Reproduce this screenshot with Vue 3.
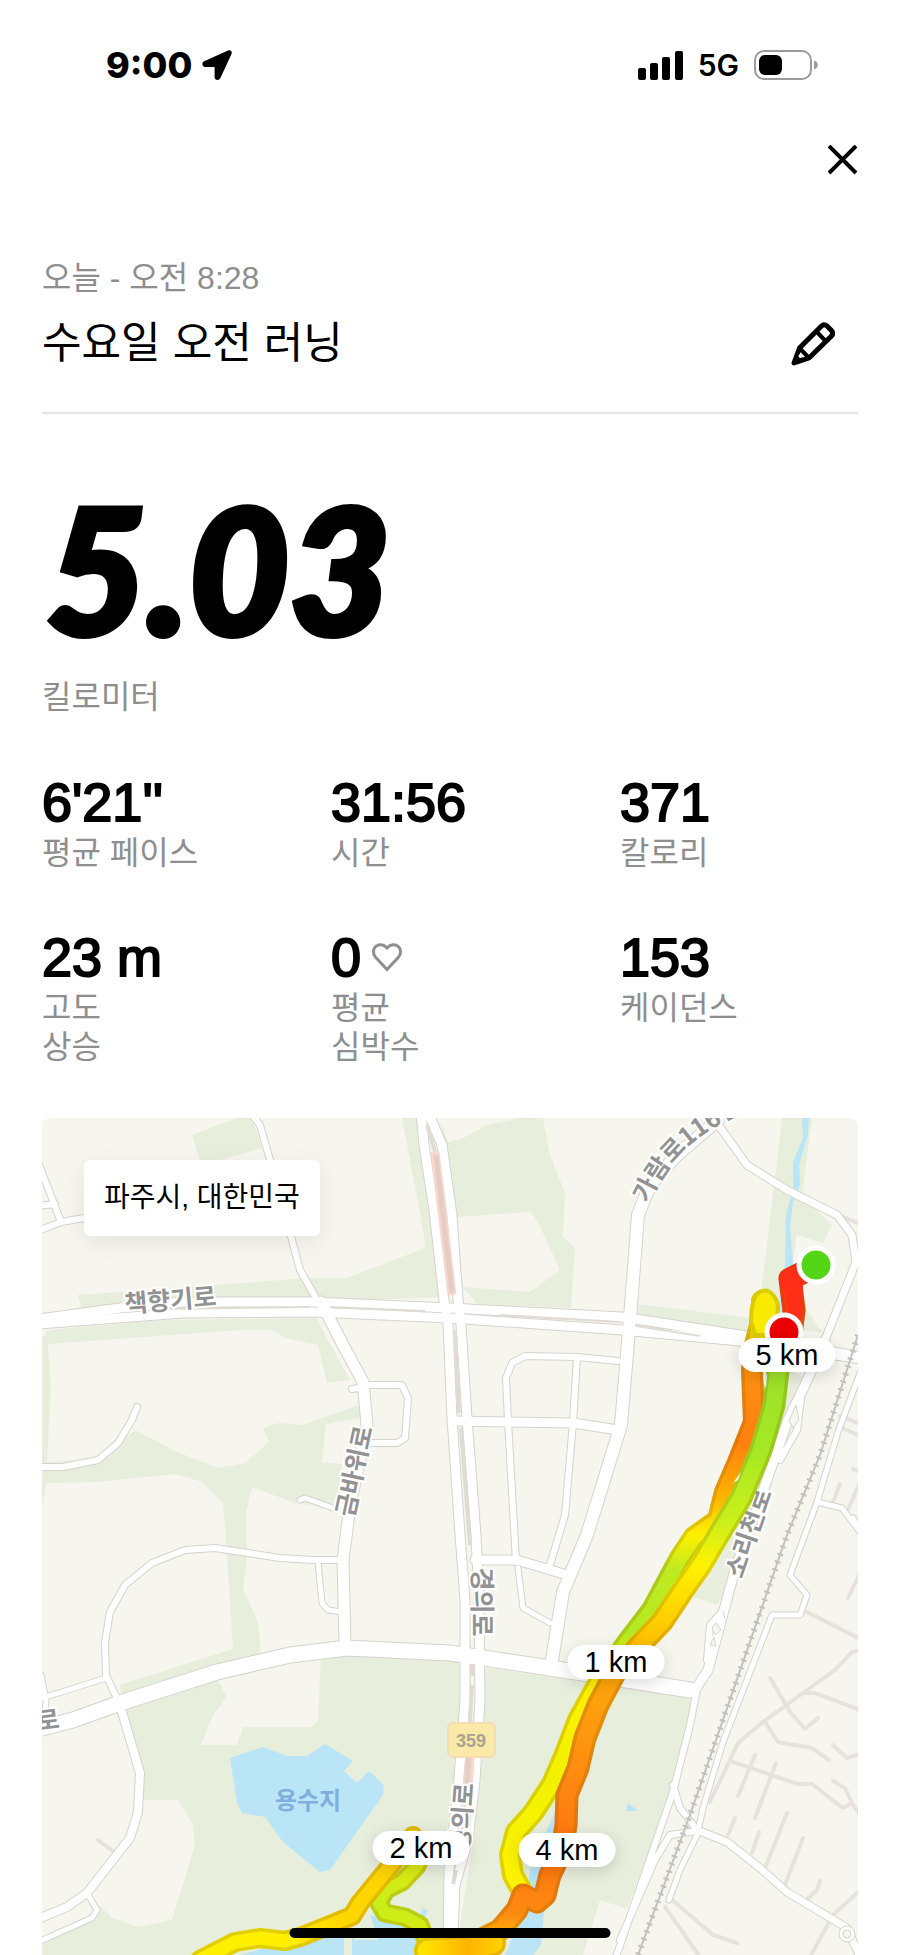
<template>
  <main class="run">
    <header class="status-bar">
      <div class="status-time">
        <span>9:00</span>
        <svg width="30" height="30" viewBox="0 0 30 30" aria-hidden="true">
          <path d="M26 .6 2.200 11.200C-.8 12.600 0 17 3.200 17H12.600V27C12.600 30.400 17 31 18.400 28L29.400 4.200C30.600 1.600 28.600-.5 26 .6Z" />
        </svg>
      </div>
      <div class="status-icons">
        <svg width="45" height="29" viewBox="0 0 45 29" aria-hidden="true">
          <rect x="0" y="17" width="8" height="12" rx="2" />
          <rect x="12" y="12" width="8" height="17" rx="2" />
          <rect x="24" y="6" width="8" height="23" rx="2" />
          <rect x="37" y="0" width="8" height="29" rx="2" />
        </svg>
        <span class="network">5G</span>
        <svg width="64" height="30" viewBox="0 0 64 30" aria-hidden="true">
          <rect x="1" y="1" width="56" height="28" rx="9" fill="none" stroke="#9b9b9b" stroke-width="2" />
          <rect x="5" y="5" width="23" height="20" rx="6" />
          <path d="M60 10.500C65 12 65 18 60 19.500Z" fill="#9b9b9b" />
        </svg>
      </div>
    </header>

    <nav class="toolbar">
      <button type="button" class="icon-button" aria-label="닫기">
        <svg width="30" height="30" viewBox="0 0 30 30" aria-hidden="true">
          <path d="M1 1 28 28M28 1 1 28" fill="none" stroke="#000" stroke-width="4" />
        </svg>
      </button>
    </nav>

    <section class="heading">
      <div>
        <p class="date">오늘 - 오전 8:28</p>
        <h1 class="title">수요일 오전 러닝</h1>
      </div>
      <button type="button" class="icon-button edit" aria-label="이름 수정">
        <svg width="44" height="44" viewBox="0 0 44 44" aria-hidden="true">
          <g fill="none" stroke="#000" stroke-width="5" stroke-linejoin="round">
            <path d="M3 41 8.500 26 30.500 4Q33 1.500 36 4L40.500 8.500Q43 11.500 40.500 14L18 36Z" />
            <path d="M25.500 9.500 35 19.500M8.500 26 18 36" stroke-width="4" />
          </g>
          <path d="M2 42 6 30 14 38Z" />
          <circle cx="9.500" cy="34" r="2" fill="#fff" />
        </svg>
      </button>
    </section>

    <section class="distance">
      <p class="distance-value">5.03</p>
      <p class="label">킬로미터</p>
    </section>

    <dl class="stats">
      <div v-for="stat in stats" :key="stat.label" class="stat">
        <dd class="value">
          {{ stat.value }}
          <svg v-if="stat.heart" width="32" height="30" viewBox="0 0 32 30" aria-hidden="true">
            <path
              d="M16 27.500 4.800 15.600C-2.500 7 8.500-2.500 16 6 23.500-2.500 34.500 7 27.200 15.600Z"
              fill="none"
              stroke="#8e8e8e"
              stroke-width="3"
            />
          </svg>
        </dd>
        <dt class="label">{{ stat.label }}</dt>
      </div>
    </dl>

    <section class="map" aria-label="러닝 경로">
      <svg class="map-canvas" :viewBox="`${view.x} ${view.y} ${view.w} ${view.h}`">
        <defs>
          <linearGradient
            v-for="track in tracks"
            :id="track.id"
            :key="track.id"
            gradientUnits="userSpaceOnUse"
            :x1="track.from[0]"
            :y1="track.from[1]"
            :x2="track.to[0]"
            :y2="track.to[1]"
          >
            <stop v-for="[offset, color] in track.stops" :key="offset" :offset="offset" :stop-color="color" />
          </linearGradient>
          <path id="garam-ro" d="M648 1204Q666 1164 694 1142T778 1094" />
        </defs>

        <!-- land -->
        <rect x="42" y="1118" width="816" height="837" fill="#f7f6ee" />
        <g fill="#e7eedc">
          <polygon v-for="area in parks" :key="area" :points="area" />
        </g>
        <g fill="#f7f6ee">
          <polygon v-for="area in clearings" :key="area" :points="area" />
        </g>
        <g fill="#b9e5f7">
          <polygon v-for="area in waters" :key="area" :points="area" />
        </g>
        <path d="M348 1930V1955M354 1936H378" fill="none" stroke="#e7eedc" stroke-width="8" />

        <!-- roads: casing first, then surface -->
        <g fill="none" stroke="#e6e2dc" stroke-width="4" stroke-linecap="round" stroke-linejoin="round">
          <path v-for="d in lanes" :key="d" :d="d" />
        </g>
        <g fill="none" stroke="#d6d2cd" stroke-linecap="round" stroke-linejoin="round">
          <path v-for="[width, d] in roads" :key="d" :d="d" :stroke-width="width + 2" />
        </g>
        <g fill="none" stroke="#fff" stroke-linecap="round" stroke-linejoin="round">
          <path v-for="[width, d] in roads" :key="d" :d="d" :stroke-width="width" />
        </g>
        <g fill="none" stroke="#e0dcd5" stroke-width="4">
          <path d="M427 1125 435 1152M455 1330 459 1413M461 1428 470 1545M472 1665V1676M472 1685 470 1722" />
          <path d="M160 1309 310 1307M330 1307 425 1311M500 1315 620 1322M636 1326 700 1336" stroke-width="2" />
          <path d="M456 1870 453 1884" />
        </g>
        <path d="M435 1152 452 1295M470 1757 465 1845" fill="none" stroke="#f7d8cf" stroke-width="9" />
        <path d="M436 1155 452 1293M469 1757 467 1785" fill="none" stroke="#e6cdc3" stroke-width="5" />
        <circle cx="847" cy="1934" r="8" fill="#fff" stroke="#d6d2cd" />
        <circle cx="847" cy="1934" r="4" fill="#f7f6ee" stroke="#d6d2cd" />
        <path
          d="M796 1405 799 1420 793 1428 789 1421ZM716 1623 721 1630 715 1635 712 1628ZM714 1637 710 1645 716 1646ZM723 1611 725 1619"
          fill="#f7f6ee"
          stroke="#d6d2cd"
        />
        <g fill="none" stroke="#c3c1be">
          <path d="M858 1335 820 1455 787 1535 690 1815 638 1955" stroke-width="2" />
          <path d="M858 1335 820 1455 787 1535 690 1815 638 1955" stroke-width="6" stroke-dasharray="2 6" />
        </g>

        <!-- road names -->
        <g class="road-name">
          <text transform="translate(171 1309) rotate(-5)">책향기로</text>
          <text transform="translate(363 1473) rotate(-78)">금바위로</text>
          <text transform="translate(473 1602) rotate(90)">경의로</text>
          <text transform="translate(471 1818) rotate(-86)">경의로</text>
          <text transform="translate(757 1536) rotate(-71)">소리천로</text>
          <text transform="translate(49 1729) rotate(-7)">로</text>
          <text class="start"><textPath href="#garam-ro">가람로116번길</textPath></text>
        </g>
        <text class="lake-name" x="308" y="1809">용수지</text>
        <rect x="448" y="1723" width="47" height="34" rx="5" fill="#fbe9a8" stroke="#f6dcb4" stroke-width="2" />
        <text class="route-number" x="471" y="1747">359</text>

        <!-- running track -->
        <g v-for="track in tracks" :key="track.id" fill="none" stroke-linecap="round" stroke-linejoin="round">
          <path :d="track.d" :stroke="`url(#${track.id})`" :stroke-width="track.width" />
          <path :d="track.d" stroke="#7a5a00" stroke-opacity=".22" :stroke-width="track.width" />
          <path :d="track.d" :stroke="`url(#${track.id})`" :stroke-width="track.width - 7" />
        </g>
        <path
          d="M762 1291C771 1288 778 1300 778 1308L774 1335H755L751 1322Q751 1294 762 1291Z"
          fill="#f8ea00"
          stroke="#dccb00"
          stroke-width="4"
        />
        <path d="M783 1272Q790 1265 802 1268L803 1290 801 1320H788L787 1294 779 1284Z" fill="#ff2e16" />
        <path d="M763 1376 767 1374 766 1389ZM733 1483 741 1472 738 1480Z" fill="#f7f6ee" />
        <circle cx="816" cy="1265" r="17" fill="#52d615" stroke="#fff" stroke-width="5" />
        <circle cx="784" cy="1332" r="17" fill="#eb0000" stroke="#fff" stroke-width="5" />
      </svg>

      <span class="place">파주시, 대한민국</span>
      <span v-for="pin in pins" :key="pin.label" class="pin" :style="pinPosition(pin)">{{ pin.label }}</span>
    </section>

    <div class="home-indicator"></div>
  </main>
</template>

<script setup>
const stats = [
  { value: "6'21''", label: '평균 페이스' },
  { value: '31:56', label: '시간' },
  { value: '371', label: '칼로리' },
  { value: '23 m', label: '고도\n상승' },
  { value: '0', label: '평균\n심박수', heart: true },
  { value: '153', label: '케이던스' },
];

const view = { x: 42, y: 1118, w: 816, h: 837 };

const pins = [
  { label: '5 km', x: 787, y: 1355 },
  { label: '1 km', x: 616, y: 1662 },
  { label: '2 km', x: 421, y: 1848 },
  { label: '4 km', x: 567, y: 1850 },
];

const pinPosition = ({ x, y }) => ({
  left: `${((x - view.x) / view.w) * 100}%`,
  top: `${((y - view.y) / view.h) * 100}%`,
});

const parks = [
  '192,1135 237,1118 252,1118 262,1148 220,1160 200,1160',
  '402,1118 422,1118 440,1200 446,1290 436,1298 420,1298 320,1302 82,1310 78,1295 310,1278 347,1278 425,1248 424,1235',
  '440,1118 448,1142 463,1138 487,1125 520,1118 543,1118 550,1155 565,1193 563,1237 575,1248 571,1308 477,1304 462,1286 450,1180',
  '42,1338 48,1330 163,1320 317,1318 327,1338 350,1380 327,1383 318,1345 285,1338 272,1330 240,1330 48,1344 51,1385 47,1463 42,1463',
  '42,1463 97,1458 117,1445 135,1430 177,1452 218,1468 245,1463 269,1442 263,1428 278,1423 302,1425 360,1405 360,1418 326,1424 322,1462 342,1464 338,1500 328,1508 292,1502 252,1487 246,1513 247,1560 243,1588 258,1622 261,1655 123,1696 119,1685 233,1649 225,1525 223,1503 202,1482 175,1474 97,1482 47,1483 42,1505',
  '122,1705 225,1670 320,1655 452,1655 462,1668 462,1740 448,1900 448,1955 42,1955 42,1940 92,1918 100,1905 140,1840 144,1770',
  '486,1668 610,1685 690,1697 690,1712 668,1800 627,1909 600,1900 583,1955 455,1955 475,1830 485,1680',
  '782,1118 812,1118 802,1195 832,1225 823,1243 797,1235 793,1262 800,1300 823,1333 762,1325 762,1285',
  '638,1304 752,1318 753,1332 637,1316',
  '783,1365 805,1378 783,1425 745,1560 717,1605 680,1593 690,1560 750,1450',
];

const clearings = [
  '440,1118 470,1118 463,1138 448,1142',
  '456,1217 530,1212 537,1220 560,1270 530,1292 463,1287',
  '215,1675 227,1697 212,1717 201,1745 237,1745 243,1727 312,1727 318,1720 321,1655',
  '138,1800 178,1800 193,1825 195,1845 172,1920 138,1927 112,1918 95,1900 125,1850',
];

const waters = [
  '802,1118 809,1118 808,1135 799,1165 800,1185 793,1202 790,1228 793,1262 780,1320 776,1320 785,1272 786,1215 793,1188 793,1162 803,1138',
  '230,1758 263,1747 287,1756 307,1756 325,1744 353,1761 344,1771 357,1783 369,1771 384,1785 383,1795 330,1870 320,1872 283,1842 265,1817 242,1813 237,1802',
  '555,1812 562,1870 545,1905 542,1930 541,1945 533,1955 505,1955 525,1910 530,1870 533,1860',
  '370,1915 430,1925 440,1955 240,1955 300,1938 375,1930',
  '423,1908 428,1911 424,1918 420,1915',
  '628,1803 638,1811 626,1811',
];

const lanes = [
  'M807 1612 858 1638',
  'M860 1650 852 1652 835 1670 803 1693 763 1722 738 1743 710 1802',
  'M803 1693H815L860 1710',
  'M770 1678 790 1712 805 1729 818 1718',
  'M765 1722 778 1742 812 1748 829 1760',
  'M833 1745 847 1758 860 1754',
  'M730 1761 798 1784H812L843 1808 852 1803 845 1788 833 1781M852 1803 860 1815',
  'M755 1755 738 1796M776 1763 755 1818',
  'M735 1818 728 1835M759 1832 752 1853M787 1813 765 1868M803 1838 785 1885',
  'M820 1881 817 1890 803 1903',
  'M857 1893 833 1915 810 1957',
  'M670 1898 713 1935 737 1943M665 1907 700 1957',
  'M860 1573 848 1598M840 1484 833 1502M860 1482 847 1512M853 1469 860 1472',
  'M841 1216 860 1224M840 1416 860 1424M840 1427 860 1436',
  'M98 1840 118 1855',
];

// [surface width, path]
const roads = [
  [6, 'M38 1162 61 1222 90 1217M61 1222 38 1231M38 1206 55 1204'],
  [6, 'M250 1112 260 1125 270 1160 292 1240 300 1270 317 1300'],
  [6, 'M38 1467H63L98 1460 118 1443 132 1420 137 1407'],
  [6, 'M365 1385H402L408 1398 405 1438 397 1443H367M352 1389 365 1387'],
  [5, 'M300 1500 305 1498 333 1508'],
  [6, 'M337 1560H313L280 1558 215 1548 185 1550 152 1563 125 1585 110 1612 105 1642 106 1675 120 1705'],
  [8, 'M120 1705 140 1773 138 1812 130 1838 87 1893 67 1907 38 1919'],
  [5, 'M106 1678 62 1692 38 1699M87 1893 97 1910 92 1918 38 1942M41 1675 46 1700 45 1720'],
  [5, 'M318 1562 322 1603 328 1610 342 1612'],
  [6, 'M508 1421 506 1378 512 1363 525 1356 577 1357 618 1361M577 1357 573 1423 565 1515 550 1565M508 1421 516 1562'],
  [5, 'M518 1568 523 1608 550 1623'],
  [9, 'M452 1421 573 1423 618 1430M475 1560 517 1560 567 1575'],
  [11, 'M321 1302 343 1345 363 1382 367 1425 350 1505 343 1560 345 1645'],
  [12, 'M718 1120 677 1155 650 1185 638 1215 630 1318 621 1425 587 1535 563 1592 552 1660'],
  [7, 'M715 1122 722 1130 747 1165 787 1190 837 1215 852 1235 856 1262 825 1340'],
  [9, 'M825 1340 805 1385 788 1420 760 1500 735 1570 724 1610 708 1670 695 1690'],
  [6, 'M802 1390 797 1430 780 1460M722 1612 710 1625 707 1660'],
  [5, 'M860 1373 838 1432 817 1502 790 1575 807 1595 800 1615 772 1615 723 1742 703 1808 697 1835 680 1870 669 1900'],
  [5, 'M817 1502 842 1508 860 1532M853 1518 862 1534'],
  [6, 'M697 1690 690 1725 673 1792 615 1960M673 1785 680 1808 697 1830M697 1831 670 1835 655 1860 620 1940'],
  [7, 'M697 1830 727 1842 760 1868 787 1892 847 1928 860 1957'],
  [9, 'M38 1319 120 1308 183 1302H313L450 1308 622 1317 740 1335 862 1357'],
  [9, 'M38 1324 183 1313 313 1312 450 1318 622 1330 740 1341 862 1359'],
  [15, 'M38 1729 73 1720 120 1703 217 1672 290 1655 347 1648 450 1653 497 1660 583 1673 690 1690'],
  [9, 'M421 1112 424 1145 434 1210 444 1300 448 1325 452 1418 460 1535 465 1600 465 1700 458 1790 449 1870 448 1960'],
  [9, 'M428 1112 442 1145 452 1215 458 1300 461 1325 467 1418 476 1535 479 1600 480 1700 475 1780 468 1840 455 1885 452 1960'],
];

const tracks = [
  {
    id: 'return-leg',
    width: 22,
    from: [0, 1290],
    to: [0, 1900],
    stops: [
      [0, '#f5ea00'],
      [0.07, '#f0d000'],
      [0.12, '#ff9210'],
      [0.25, '#ff8010'],
      [0.34, '#ffb400'],
      [0.4, '#fff000'],
      [0.46, '#c0ea20'],
      [0.56, '#b4ea22'],
      [0.63, '#fff000'],
      [0.8, '#f2f200'],
      [1, '#fff200'],
    ],
    d: 'M762 1301 764 1310 760 1325 755 1345 752 1370 754 1422 738 1462 725 1492 718 1520 694 1537 680 1558 666 1584 652 1610 629 1640 600 1680 578 1720 565 1754 552 1784 533 1813 516 1832 510 1855 513 1875 523 1893',
  },
  {
    id: 'outbound-leg',
    width: 23,
    from: [0, 1260],
    to: [0, 1955],
    stops: [
      [0, '#ff2d16'],
      [0.08, '#ff3c12'],
      [0.14, '#9be02a'],
      [0.27, '#a4e824'],
      [0.38, '#cdf01a'],
      [0.44, '#fff200'],
      [0.54, '#ffc400'],
      [0.61, '#ffa50a'],
      [0.72, '#ff8f10'],
      [0.85, '#ff7410'],
      [0.94, '#ff8a10'],
      [1, '#ffd000'],
    ],
    d: 'M802 1273 790 1279 794 1310 790 1345 778 1370 774 1405 761 1450 741 1498 718 1536 701 1565 682 1592 662 1622 640 1645 615 1673 598 1705 585 1738 578 1768 567 1795 566 1825 562 1850 550 1875 545 1895 537 1902 523 1895 517 1910 500 1930 470 1945 430 1950',
  },
  {
    id: 'pond-loop',
    width: 19,
    from: [0, 1830],
    to: [0, 1955],
    stops: [
      [0, '#e4dc10'],
      [0.3, '#dcea14'],
      [0.6, '#c8ee1a'],
      [0.85, '#d8ea10'],
      [1, '#ffe600'],
    ],
    d: 'M413 1836 424 1848 417 1866 402 1882 386 1890 379 1903 385 1913 405 1917 420 1925 428 1945 430 1960',
  },
  {
    id: 'west-leg',
    width: 20,
    from: [200, 0],
    to: [413, 0],
    stops: [
      [0, '#fff000'],
      [0.4, '#fff000'],
      [0.65, '#ffd800'],
      [1, '#ffd200'],
    ],
    d: 'M413 1836 387 1870 360 1903 352 1916 330 1925 300 1937 285 1941 260 1938 235 1942 200 1960',
  },
  {
    id: 'south-leg',
    width: 28,
    from: [425, 0],
    to: [510, 0],
    stops: [
      [0, '#ffe100'],
      [0.5, '#ffb400'],
      [1, '#ffd800'],
    ],
    d: 'M428 1951 470 1949 492 1943',
  },
];
</script>

<style>
body {
  margin: 0;
  background: #fff;
}
</style>

<style scoped>
.run {
  position: relative;
  padding: 0 42px;
  color: #000;
  font-family: 'Liberation Sans', 'Noto Sans CJK KR', sans-serif;
}

.run p,
.run h1,
.run dl,
.run dd {
  margin: 0;
}

.status-bar {
  display: flex;
  align-items: center;
  justify-content: space-between;
  height: 130px;
  padding: 0 40px 0 64px;
  font-family: Inter, sans-serif;
}

.status-time,
.status-icons {
  display: flex;
  align-items: center;
}

.status-time {
  gap: 10px;
  font-size: 36px;
  font-weight: 800;
}

.status-icons {
  gap: 15px;
}

.network {
  font-size: 30px;
  font-weight: 600;
}

.toolbar {
  display: flex;
  align-items: center;
  justify-content: flex-end;
  height: 60px;
}

.icon-button {
  display: flex;
  padding: 0;
  border: 0;
  background: none;
}

.heading {
  display: flex;
  align-items: flex-end;
  justify-content: space-between;
  padding: 67px 0 41px;
  border-bottom: 2px solid #e5e5e5;
}

.heading > div {
  display: grid;
  gap: 16px;
}

.date {
  color: #8e8e8e;
  font-size: 32px;
  line-height: 42px;
}

.title {
  font-size: 43px;
  font-weight: 400;
  line-height: 56px;
}

.edit {
  margin: 0 23px 5px 0;
}

.distance {
  display: grid;
  gap: 20px;
  padding-top: 64px;
}

.distance-value {
  padding-left: 4px;
  font-family: Lato, sans-serif;
  font-size: 174px;
  font-style: italic;
  font-weight: 900;
  line-height: 180px;
  -webkit-text-stroke: 6px #000;
}

.label {
  color: #8e8e8e;
  font-size: 32px;
  line-height: 39px;
  white-space: pre-line;
}

.run .stats {
  display: grid;
  grid-template-columns: repeat(3, 1fr);
  gap: 52px 51px;
  margin-top: 53px;
}

.stat {
  display: flex;
  flex-direction: column;
}

.value {
  display: flex;
  align-items: center;
  gap: 10px;
  font-size: 54px;
  line-height: 64px;
  -webkit-text-stroke: 2px #000;
}

.map {
  position: relative;
  margin-top: 51px;
  overflow: hidden;
  border-radius: 8px 8px 0 0;
}

.map-canvas {
  display: block;
  width: 100%;
}

.road-name {
  fill: #929292;
  stroke: #fff;
  stroke-width: 4px;
  paint-order: stroke;
  font-family: 'Noto Sans CJK KR', sans-serif;
  font-size: 25px;
  font-weight: 700;
  text-anchor: middle;
}

.road-name .start {
  text-anchor: start;
}

.lake-name {
  fill: #7fb0dc;
  font-family: 'Noto Sans CJK KR', sans-serif;
  font-size: 24px;
  font-weight: 700;
  text-anchor: middle;
}

.route-number {
  fill: #aaa391;
  font-family: 'Liberation Sans Narrow', 'Liberation Sans', sans-serif;
  font-size: 18px;
  font-weight: 700;
  text-anchor: middle;
}

.place {
  position: absolute;
  top: 42px;
  left: 42px;
  padding: 0 20px;
  border-radius: 6px;
  background: #fff;
  box-shadow: 0 6px 24px rgba(0, 0, 0, 0.08);
  font-size: 28px;
  line-height: 76px;
}

.pin {
  position: absolute;
  padding: 0 17px;
  border-radius: 17px;
  background: #fff;
  box-shadow: 0 4px 16px rgba(0, 0, 0, 0.15);
  font-size: 29px;
  line-height: 34px;
  white-space: nowrap;
  transform: translate(-50%, -50%);
}

.home-indicator {
  position: absolute;
  bottom: 17px;
  left: 50%;
  width: 321px;
  height: 10px;
  border-radius: 5px;
  background: #000;
  transform: translateX(-50%);
}
</style>
